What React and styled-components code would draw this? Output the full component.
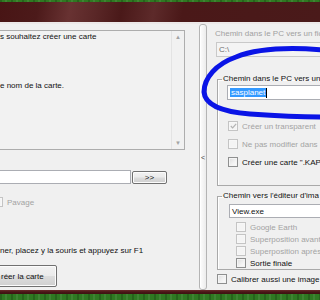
import React from 'react';
import styled, { createGlobalStyle } from 'styled-components';

const Global = createGlobalStyle`
  html, body { margin: 0; padding: 0; }
  body {
    width: 320px; height: 300px; overflow: hidden; background: #f0f0f0;
    font-family: "Liberation Sans", Arial, sans-serif; font-size: 8px; color: #111;
  }
`;

const Screen = styled.div`
  position: relative; width: 320px; height: 300px;
  display: flex; flex-direction: column; overflow: hidden;
`;

const Grass = styled.div`
  height: ${p => p.$h}px; flex: none;
  background:
    repeating-linear-gradient(90deg, rgba(0,0,0,0.18) 0 2px, transparent 2px 5px, rgba(255,255,255,0.08) 5px 7px, transparent 7px 11px),
    #2f7a22;
`;

const TitleBar = styled.div`
  height: 20px; flex: none;
  background: linear-gradient(100deg, #481515 0%, #4c1a1a 12%, #683232 22%, #5a2727 30%, #4a1919 38%, #5d2a2a 48%, #4a1818 57%, #4a1a1a 100%);
`;

const FrameEdge = styled.div`
  height: 2px; flex: none; background: #ece8e8;
`;

const BottomEdge = styled.div`
  height: 4px; flex: none;
  background: linear-gradient(180deg, #6a2a2a 0, #4a1717 2px, #3d1212 4px);
`;

const Main = styled.div`
  flex: 1; display: flex; min-height: 0;
`;

const LeftPane = styled.div`
  width: 199px; flex: none; display: flex; flex-direction: column;
  padding-top: 6px; box-sizing: border-box; overflow: hidden;
`;

const Memo = styled.div`
  width: 185px; height: 120px; box-sizing: border-box; display: flex;
  border: 1px solid #adadad; border-left: 0; background: #f2f2f2;
`;

const MemoText = styled.div`
  flex: 1; line-height: 12.25px; white-space: pre; overflow: hidden;
`;

const ScrollBar = styled.div`
  width: 12px; flex: none; display: flex; flex-direction: column; justify-content: space-between;
  background: #f1f1f1; border-left: 1px solid #e3e3e3;
`;

const ScrollArrow = styled.div`
  height: 12px; display: flex; align-items: center; justify-content: center;
  color: #a3a3a3; font-size: 6px; line-height: 1;
`;

const FieldRow = styled.div`
  display: flex; align-items: center; gap: 1px; margin-top: 20px;
`;

const Edit = styled.div`
  box-sizing: border-box; height: ${p => p.$h || 14}px; width: ${p => p.$w}px;
  margin-left: ${p => p.$ml || 0}px; margin-top: ${p => p.$mt || 0}px;
  background: ${p => (p.$disabled ? '#f4f4f4' : '#fff')};
  border: 1px solid ${p => (p.$disabled ? '#c9c9c9' : '#abadb3')};
  border-left-width: ${p => (p.$noLeft ? 0 : 1)}px;
  color: ${p => (p.$disabled ? '#6d6d6d' : '#111')};
  display: flex; align-items: center; padding-left: 2px; flex: none; white-space: nowrap;
`;

const Button = styled.div`
  box-sizing: border-box; height: ${p => p.$h}px; width: ${p => p.$w}px;
  margin-left: ${p => p.$ml || 0}px; margin-top: ${p => p.$mt || 0}px;
  border: 1px solid #707070; border-radius: 2px;
  background: linear-gradient(180deg, #f2f2f2 0%, #ebebeb 48%, #dddddd 52%, #cfcfcf 100%);
  box-shadow: inset 0 0 0 1px #fcfcfc;
  display: flex; align-items: center; justify-content: ${p => p.$align || 'center'};
  padding-left: ${p => p.$pl || 0}px; flex: none; white-space: nowrap; color: #111;
`;

const CheckRow = styled.div`
  display: flex; align-items: center; gap: 4px; height: ${p => p.$h || 12}px;
  margin-left: ${p => p.$ml || 0}px; margin-top: ${p => p.$mt || 0}px;
  color: ${p => (p.$disabled ? '#a3a3a3' : '#111')}; white-space: nowrap;
`;

const Box = styled.div`
  width: 10px; height: 10px; box-sizing: border-box; flex: none;
  border: 1px solid ${p => (p.$disabled ? '#c4c4c4' : '#8e8f8f')};
  background: ${p => (p.$disabled ? '#f4f4f4' : 'linear-gradient(135deg, #dcdcdc 0%, #f3f3f3 60%, #fdfdfd 100%)')};
  box-shadow: inset 0 0 0 1px ${p => (p.$disabled ? '#f7f7f7' : '#f4f4f4')};
  display: flex; align-items: center; justify-content: center;
`;

const HelpText = styled.div`
  margin-top: 38px; white-space: nowrap; line-height: 10px;
`;

const Splitter = styled.div`
  width: 8px; flex: none; box-sizing: border-box;
  border: 1px solid #b4b4b4; border-radius: 3px;
  background: linear-gradient(90deg, #fdfdfd, #ececec);
  box-shadow: inset 1px 0 0 #ffffff;
  display: flex; align-items: center; justify-content: center;
  color: #404040; font-size: 7px;
`;

const RightPane = styled.div`
  flex: 1; min-width: 0; overflow: hidden; display: flex; flex-direction: column;
  padding-left: 8px; padding-top: 5px; box-sizing: border-box;
`;

const GrayLabel = styled.div`
  line-height: 10px; color: #a0a0a0; white-space: nowrap;
`;

const Group = styled.fieldset`
  margin: ${p => p.$mt}px 0 0 2px; padding: 0; width: 140px; height: ${p => p.$h}px;
  box-sizing: border-box; flex: none; min-width: 0;
  border: 1px solid #a9a9a9; border-right: 0; box-shadow: inset 1px 1px 0 #ffffff;
  display: flex; flex-direction: column;
`;

const Legend = styled.legend`
  padding: 0 1px; margin-left: 4px; line-height: 10px; white-space: nowrap; color: #111;
`;

const Selected = styled.span`
  background: #3399ff; color: #fff; line-height: 9px; padding: 0 1px;
`;

const Caret = styled.span`
  display: inline-block; width: 1px; height: 10px; background: #000;
`;

const Annotation = styled.svg`
  position: absolute; left: 0; top: 0; width: 320px; height: 300px; pointer-events: none;
`;

function Check({ disabled, checked }) {
  return (
    <Box $disabled={disabled}>
      {checked && (
        <svg width="7" height="6" viewBox="0 0 7 6">
          <path d="M0.8 3 L2.6 4.8 L6.2 0.8" fill="none" stroke={disabled ? '#b3b3b3' : '#333'} strokeWidth="1.2" />
        </svg>
      )}
    </Box>
  );
}

export default function App() {
  return (
    <Screen>
      <Global />
      <Grass $h={2} />
      <TitleBar />
      <FrameEdge />
      <Main>
        <LeftPane>
          <Memo>
            <MemoText>{'s souhaitez créer une carte\n\n\n\ne nom de la carte.'}</MemoText>
            <ScrollBar>
              <ScrollArrow>▲</ScrollArrow>
              <ScrollArrow>▼</ScrollArrow>
            </ScrollBar>
          </Memo>
          <FieldRow>
            <Edit $w={131} $noLeft />
            <Button $w={35} $h={13}>&gt;&gt;</Button>
          </FieldRow>
          <CheckRow $disabled $ml={-7} $mt={12}>
            <Check disabled />
            <span>Pavage</span>
          </CheckRow>
          <HelpText>ner, placez y la souris et appuyez sur F1</HelpText>
          <Button $w={60} $h={22} $ml={-3} $mt={9} $align="flex-start" $pl={3}>réer la carte</Button>
        </LeftPane>
        <Splitter>&lt;</Splitter>
        <RightPane>
          <GrayLabel>Chemin dans le PC vers un fic</GrayLabel>
          <Edit $w={130} $h={15} $ml={1} $mt={3} $disabled>C:\</Edit>
          <Group $mt={17} $h={112}>
            <Legend>Chemin dans le PC vers un</Legend>
            <Edit $w={120} $h={15} $ml={9} $mt={1}>
              <Selected>sasplanet</Selected><Caret />
            </Edit>
            <CheckRow $disabled $ml={10} $mt={20} $h={12}>
              <Check disabled checked />
              <span>Créer un transparent</span>
            </CheckRow>
            <CheckRow $disabled $ml={10} $mt={6} $h={12}>
              <Check disabled />
              <span>Ne pas modifier dans</span>
            </CheckRow>
            <CheckRow $ml={10} $mt={6} $h={12}>
              <Check />
              <span>Créer une carte ".KAP</span>
            </CheckRow>
          </Group>
          <Group $mt={5} $h={79}>
            <Legend>Chemin vers l'éditeur d'ima</Legend>
            <Edit $w={120} $h={14} $ml={11} $mt={3}>View.exe</Edit>
            <CheckRow $disabled $ml={18} $mt={3} $h={12}>
              <Check disabled />
              <span>Google Earth</span>
            </CheckRow>
            <CheckRow $disabled $ml={18} $h={12}>
              <Check disabled />
              <span>Superposition avant</span>
            </CheckRow>
            <CheckRow $disabled $ml={18} $h={12}>
              <Check disabled />
              <span>Superposition après</span>
            </CheckRow>
            <CheckRow $ml={18} $h={12}>
              <Check />
              <span>Sortie finale</span>
            </CheckRow>
          </Group>
          <CheckRow $ml={2} $mt={3} $h={12}>
            <Check />
            <span>Calibrer aussi une image</span>
          </CheckRow>
        </RightPane>
      </Main>
      <BottomEdge />
      <Grass $h={6} />
      <Annotation viewBox="0 0 320 300">
        <path
          d="M 324 50 C 288 47, 256 49, 236 57 C 216 64, 204 78, 204 92 C 205 106, 225 112, 250 114 C 280 116, 305 117, 324 117"
          fill="none" stroke="#0a14e6" strokeWidth="5" strokeLinecap="round"
        />
      </Annotation>
    </Screen>
  );
}
